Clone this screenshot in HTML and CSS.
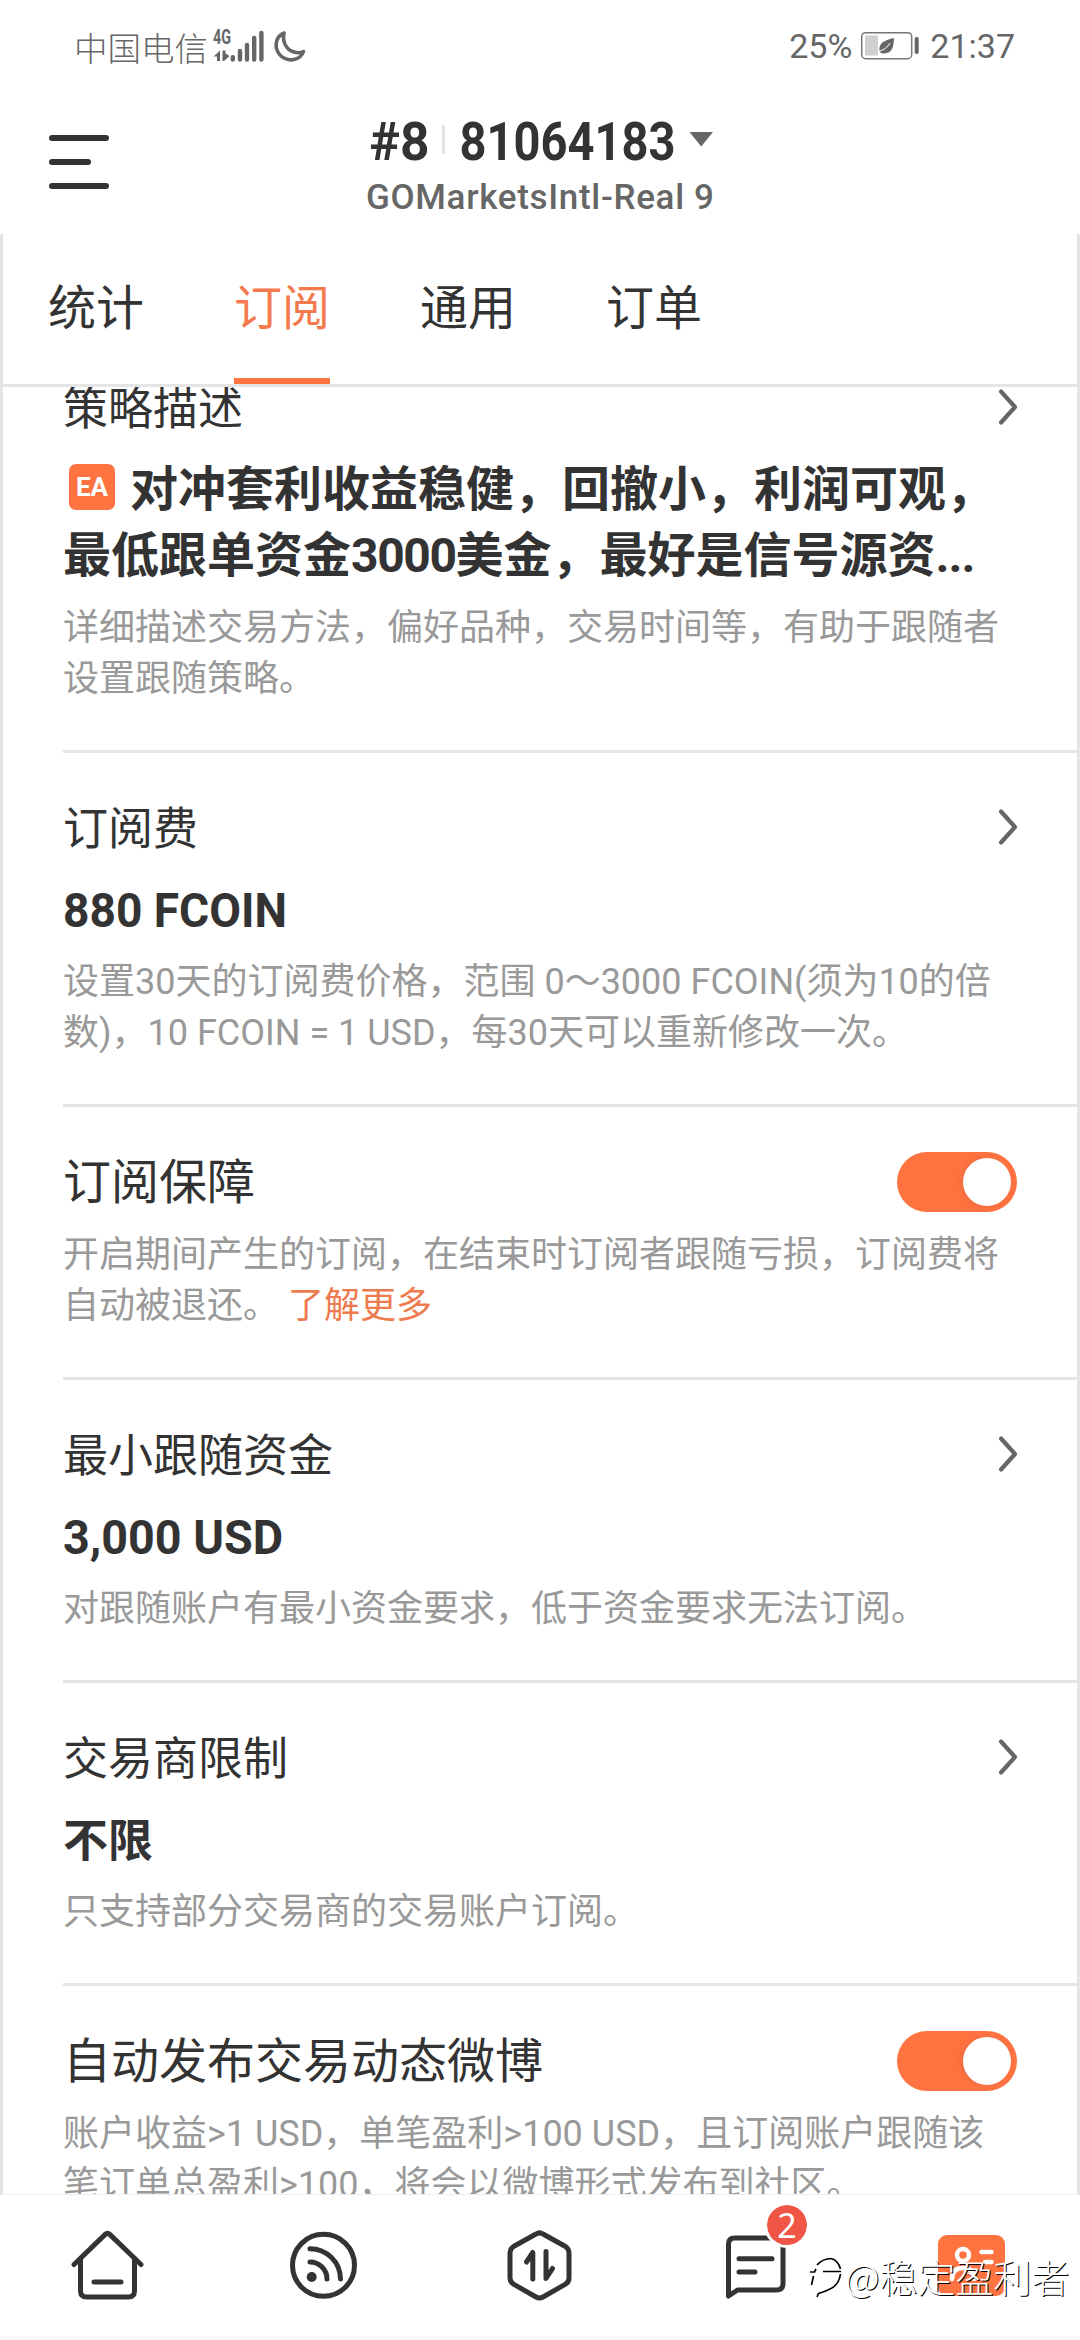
FILE: index.html
```html
<!DOCTYPE html>
<html lang="zh-CN">
<head>
<meta charset="utf-8">
<title>订阅</title>
<link rel="stylesheet" href="styles.css">
</head>
<body>
<div class="screen">
  <div class="status">
    <div class="status-left">
      <span class="carrier">中国电信</span>
      <svg class="signal" width="54" height="34" viewBox="212 28 54 34">
        <text class="net" x="213" y="43" textLength="18" lengthAdjust="spacingAndGlyphs">4G</text>
        <path d="M213.500 55.500L220 49.500V60H217V55.500ZM222.500 49.500H225.500V52.500L229.500 55L224 60H222.500Z" fill="#666"/>
        <path d="M232.800 56.200v2.300M240 50v8.500M247 44v14.500M254.200 37v21.500M261.400 32v26.500" stroke="#666" stroke-width="4.400" stroke-linecap="round"/>
      </svg>
      <svg class="moon" width="34" height="34" viewBox="273 28 34 34">
        <path d="M284 32C274.500 36 274 48 280.500 54.500C288.500 62 300.500 59 303.500 50.500C298.500 53 291 51.500 287 46.500C283.500 42 282.800 37 284 32Z" fill="none" stroke="#666" stroke-width="3.600" stroke-linejoin="round"/>
      </svg>
    </div>
    <div class="status-right">
      <span class="pct">25%</span>
      <svg class="battery" width="60" height="30" viewBox="861 31 60 30">
        <rect x="862.700" y="32.700" width="50" height="26" rx="4" fill="none" stroke="#777" stroke-width="1.500"/>
        <rect x="866" y="35.500" width="13" height="20" fill="#d0d0d0"/>
        <rect x="915.700" y="37" width="4" height="17" rx="1.800" fill="#666"/>
        <path d="M895 38C894.500 48 893 53 885 53.500C883 53.500 881.500 53 880.500 51.500C879 43 886 40 895 38Z" fill="#666"/>
        <path d="M880 51Q887 50 891 43" fill="none" stroke="#fff" stroke-width="1"/>
      </svg>
      <span class="clock">21:37</span>
    </div>
  </div>

  <header class="header">
    <svg class="menu" width="60" height="54" viewBox="0 0 60 54">
      <path d="M3 3h54M3 27h36M3 51h54" stroke="#333" stroke-width="6" stroke-linecap="round"/>
    </svg>
    <div class="account">
      <svg width="350" height="50" viewBox="365 116 350 50">
        <text class="acct" x="369.500" y="160" textLength="60" lengthAdjust="spacingAndGlyphs">#8</text>
        <rect x="442" y="125" width="3" height="29" fill="#e5e5e5"/>
        <text class="acct" x="459.500" y="160" textLength="216" lengthAdjust="spacingAndGlyphs">81064183</text>
        <path d="M689.500 132H713L701.200 146.500Z" fill="#666"/>
      </svg>
      <svg width="350" height="36" viewBox="365 180 350 36">
        <text class="server" x="366" y="209" textLength="348" lengthAdjust="spacing">GOMarketsIntl-Real 9</text>
      </svg>
    </div>
  </header>

  <main class="panel">
    <nav class="tabs">
      <span class="tab">统计</span>
      <span class="tab active">订阅</span>
      <span class="tab">通用</span>
      <span class="tab">订单</span>
    </nav>
    <div class="list">
      <section class="item first">
        <div class="head"><h2>策略描述</h2><svg class="chev" width="20" height="38" viewBox="0 0 20 38"><path d="M3 3.500L17 19L3 34.500"/></svg></div>
        <p class="strategy"><span class="ea">EA</span>对冲套利收益稳健，回撤小，利润可观，<br>最低跟单资金<span class="num">3000</span>美金，最好是信号源资<span class="dots">...</span></p>
        <p class="desc">详细描述交易方法，偏好品种，交易时间等，有助于跟随者<br>设置跟随策略。</p>
      </section>
      <section class="item">
        <div class="head"><h2>订阅费</h2><svg class="chev" width="20" height="38" viewBox="0 0 20 38"><path d="M3 3.500L17 19L3 34.500"/></svg></div>
        <div class="value"><svg width="300" height="48" viewBox="0 0 300 48"><text x="0" y="41" textLength="224" lengthAdjust="spacingAndGlyphs">880 FCOIN</text></svg></div>
        <p class="desc">设置30天的订阅费价格，范围 0～3000 FCOIN(须为10的倍<br>数)，10 FCOIN = 1 USD，每30天可以重新修改一次。</p>
      </section>
      <section class="item toggle">
        <div class="head"><h2>订阅保障</h2><span class="switch"><i></i></span></div>
        <p class="desc">开启期间产生的订阅，在结束时订阅者跟随亏损，订阅费将<br>自动被退还。 <a>了解更多</a></p>
      </section>
      <section class="item">
        <div class="head"><h2>最小跟随资金</h2><svg class="chev" width="20" height="38" viewBox="0 0 20 38"><path d="M3 3.500L17 19L3 34.500"/></svg></div>
        <div class="value"><svg width="300" height="48" viewBox="0 0 300 48"><text x="0" y="41" textLength="220" lengthAdjust="spacingAndGlyphs">3,000 USD</text></svg></div>
        <p class="desc">对跟随账户有最小资金要求，低于资金要求无法订阅。</p>
      </section>
      <section class="item">
        <div class="head"><h2>交易商限制</h2><svg class="chev" width="20" height="38" viewBox="0 0 20 38"><path d="M3 3.500L17 19L3 34.500"/></svg></div>
        <div class="value zh">不限</div>
        <p class="desc">只支持部分交易商的交易账户订阅。</p>
      </section>
      <section class="item toggle">
        <div class="head"><h2>自动发布交易动态微博</h2><span class="switch"><i></i></span></div>
        <p class="desc">账户收益&gt;1 USD，单笔盈利&gt;100 USD，且订阅账户跟随该<br>笔订单总盈利&gt;100，将会以微博形式发布到社区。</p>
      </section>
    </div>
  </main>

  <footer class="nav">
    <div class="nav-item"><svg width="76" height="76" viewBox="70 2227 76 76" class="ico">
      <path d="M74 2264.500L105 2234.600Q107.500 2232.200 110 2234.600L141 2264.500M80.500 2259V2291Q80.500 2297 86.500 2297H128.500Q134.500 2297 134.500 2291V2259M94 2282H121"/></svg></div>
    <div class="nav-item"><svg width="76" height="76" viewBox="286 2227 76 76" class="ico">
      <circle cx="323.500" cy="2265.300" r="31"/><path d="M310 2248.700A30.500 30.500 0 0 1 340.500 2279M310 2262A17 17 0 0 1 327 2279"/><circle cx="311.700" cy="2277" r="5" class="solid"/></svg></div>
    <div class="nav-item"><svg width="76" height="76" viewBox="502 2227 76 76" class="ico">
      <path d="M536 2234Q539.500 2231.800 543 2234L565.500 2246.500Q569 2248.800 569 2253V2278Q569 2282 565.500 2284.200L543 2297Q539.500 2299 536 2297L513.500 2284.200Q510 2282 510 2278V2253Q510 2248.800 513.500 2246.500Z"/><path d="M526.500 2262L532.800 2252.500V2279M546 2251.500V2278.500L552.500 2268.500"/></svg></div>
    <div class="nav-item"><svg width="76" height="76" viewBox="718 2227 76 76" class="ico">
      <path d="M728.500 2296V2244Q728.500 2238 734.500 2238H776.500Q783 2238 783 2244V2283.500Q783 2290 776.500 2290H737.500L728.500 2296Z"/><path d="M739 2258.700H772M739 2272H755"/></svg><span class="badge">2</span></div>
    <div class="nav-item"><svg width="76" height="76" viewBox="934 2227 76 76">
      <rect x="938" y="2235" width="67" height="61" rx="9" fill="#ff7341"/>
      <g fill="none" stroke="#fff" stroke-width="4.500" stroke-linecap="round"><circle cx="963" cy="2255" r="6"/><path d="M981.500 2252H991.500M985 2262H991.500M952 2279Q952 2268 963 2268Q974 2268 974 2279"/></g></svg></div>
    <div class="watermark"><svg width="36" height="42" viewBox="809 2262 36 42"><path d="M810 2278H814.500L816 2275M813.500 2282L811.500 2291M817 2271Q823 2264.500 831 2264.500Q838 2266 840.500 2275M823 2277.500H841M840.500 2280Q839 2291 830 2295Q824 2298 818.500 2299.500L817 2303"/></svg>@稳定盈利者</div>
  </footer>
</div>
</body>
</html>
```
FILE: styles.css
```css
* { box-sizing: border-box; margin: 0; padding: 0; }
body {
  background: #fff;
  color: #333;
  font-family: Roboto, "Noto Sans CJK SC", sans-serif;
}
svg { display: block; flex: none; overflow: visible; }
.screen { width: 1080px; height: 2340px; display: flex; flex-direction: column; overflow: hidden; background: #fff; }

.status { height: 92px; flex: none; padding: 0 65px 0 74px; display: flex; justify-content: space-between; align-items: center; color: #666; }
.status-left, .status-right { display: flex; align-items: center; white-space: nowrap; }
.carrier { font-size: 33.500px; font-weight: 300; margin-right: 4px; }
.net { font: 700 20px Roboto, sans-serif; fill: #666; }
.moon { margin-left: 7px; }
.pct, .clock { font-size: 34px; }
.battery { margin: 0 10px 0 8px; }

.header { height: 142px; flex: none; padding: 0 49px; display: flex; align-items: flex-start; }
.menu { margin-top: 43px; }
.account { margin: 24px auto 0; padding-right: 60px; display: flex; flex-direction: column; align-items: center; gap: 14px; }
.acct { font: 700 53px Roboto, sans-serif; fill: #333; }
.server { font: 500 35px Roboto, sans-serif; fill: #666; }

.panel { height: 1960px; display: flex; flex-direction: column; border: solid #e5e5e5; border-width: 0 3px; overflow: hidden; flex: none; }
.tabs { height: 153px; flex: none; padding-left: 45px; display: flex; gap: 90px; border-bottom: 3px solid #e5e5e5; }
.tab { width: 96px; font-size: 48px; line-height: 149px; height: 150px; }
.active { color: #f47a4e; border-bottom: 6px solid #ff7341; }
.list { flex: 1; overflow: hidden; padding-left: 60px; }
.item { border-bottom: 3px solid #e5e5e5; padding: 39px 0 45px; }
.item:last-child { border: 0; }
.head { height: 72px; display: flex; justify-content: space-between; align-items: center; padding-right: 59px; }
h2 { font-size: 45px; font-weight: 400; line-height: 66px; margin-top: 3px; }
.toggle .head { margin-bottom: 11px; }
.toggle h2 { font-size: 48px; margin-top: 1px; }
.chev { margin-bottom: 2px; }
.chev path { fill: none; stroke: #666; stroke-width: 4.200; stroke-linecap: round; stroke-linejoin: round; }
.value { height: 92px; font-size: 45px; font-weight: 700; line-height: 88px; display: flex; align-items: center; }
.value text { font: 700 48px Roboto, sans-serif; fill: #333; }
.zh { padding-top: 3px; }
.desc { font-size: 36px; line-height: 51px; padding-top: 1px; color: #999; white-space: nowrap; }
.desc a { color: #ee7a50; }
.first { padding-top: 0; }
.first .head { margin-top: -15px; }
.strategy { font-size: 48px; line-height: 66px; font-weight: 700; white-space: nowrap; margin: 13px 0; }
.num { letter-spacing: -1.400px; }
.dots { letter-spacing: -1px; }
.ea { display: inline-block; width: 46px; height: 46px; line-height: 47px; margin: 0 15px 0 6px; border-radius: 7px; background: #ff7341; color: #fff; font-size: 26px; text-align: center; vertical-align: 10px; margin-top: -8px; }
.switch { width: 120px; height: 60px; border-radius: 30px; background: #ff7341; padding: 6px; display: flex; justify-content: flex-end; margin-right: 1px; }
.switch i { width: 48px; height: 48px; border-radius: 50%; background: #fff; box-shadow: -2px 0 5px #d9633a88; }

.nav { height: 146px; flex: none; border-top: 1px solid #eee; border-bottom: 4px solid #fafafa; display: flex; position: relative; background: #fff; }
.nav-item { width: 216px; padding: 32px 0 0 70px; position: relative; }
.ico { fill: none; stroke: #333; stroke-width: 5; stroke-linecap: round; stroke-linejoin: round; }
.solid { fill: #333; stroke: none; }
.badge { position: absolute; left: 116px; top: 7px; width: 46px; height: 46px; border: 3px solid #fff; border-radius: 50%; background: #f05545; background-clip: padding-box; color: #fff; font: 34px/41px "Noto Sans", sans-serif; text-align: center; }
.watermark { position: absolute; left: 809px; top: 56px; height: 50px; display: flex; align-items: center; font: 300 38px/50px "Noto Sans CJK SC", sans-serif; color: #fff; text-shadow: 1px 1px 0 #000; white-space: nowrap; }
.watermark svg { fill: none; stroke: #000; stroke-width: 1.700; margin-top: 2px; }
```
